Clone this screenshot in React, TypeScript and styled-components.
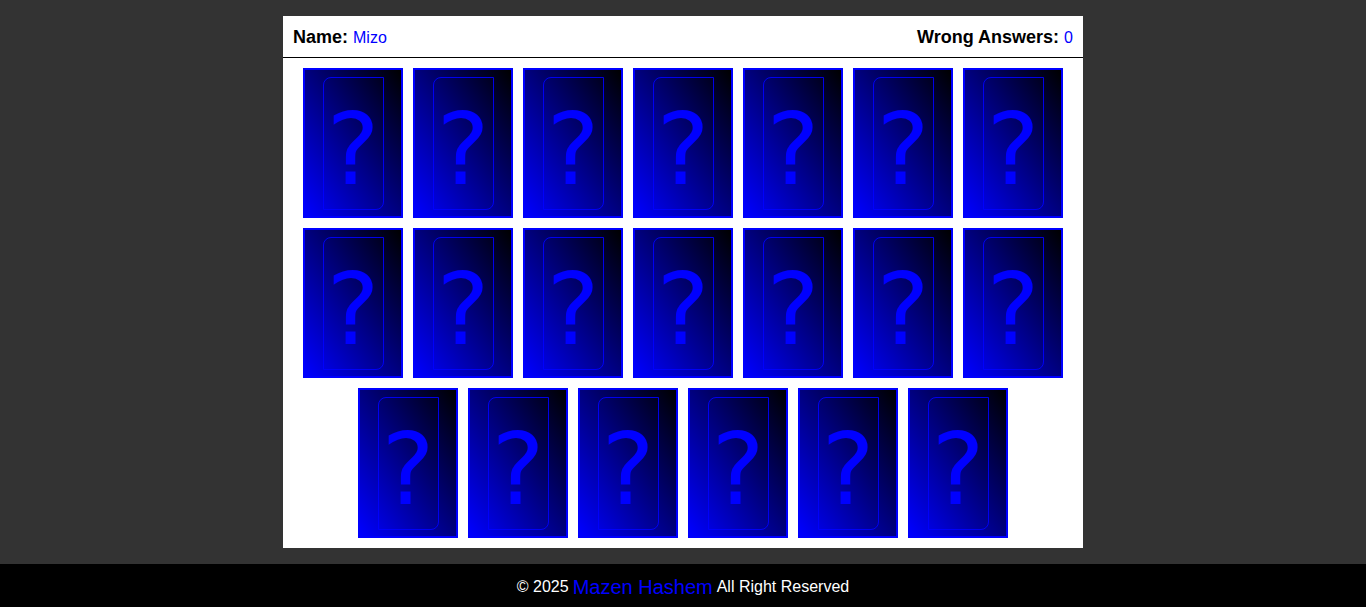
import React from "react"
import styled, { createGlobalStyle } from "styled-components"

const GlobalStyle = createGlobalStyle`
  * { box-sizing: border-box; }
  body {
    margin: 0;
    background-color: #333333;
    font-family: "Liberation Sans", Arial, sans-serif;
  }
`

const cards = Array.from({ length: 20 }, (_, i) => i)

export default function App() {
    return (
        <>
            <GlobalStyle />
            <Page>
                <Game>
                    <InfoBar>
                        <Info>Name: <Value>Mizo</Value></Info>
                        <Info>Wrong Answers: <Value>0</Value></Info>
                    </InfoBar>
                    <Cards>
                        {cards.map((c) => (
                            <Card key={c}>
                                <Face />
                                <Mark>?</Mark>
                            </Card>
                        ))}
                    </Cards>
                </Game>
                <Footer>
                    &copy; 2025 <Author>Mazen Hashem</Author> All Right Reserved
                </Footer>
            </Page>
        </>
    )
}

const Page = styled.div`
    display: flex;
    flex-direction: column;
    align-items: center;
    padding-top: 16px;
`
const Game = styled.div`
    width: 800px;
    background-color: white;
    padding-bottom: 10px;
`
const InfoBar = styled.div`
    display: flex;
    justify-content: space-between;
    align-items: center;
    height: 42px;
    padding: 2px 10px 0;
    border-bottom: 1px solid black;
`
const Info = styled.div`
    font-size: 18px;
    font-weight: bold;
    color: black;
`
const Value = styled.span`
    font-size: 16px;
    font-weight: normal;
    color: blue;
`
const Cards = styled.div`
    display: flex;
    flex-wrap: wrap;
    justify-content: center;
    gap: 10px;
    padding: 10px 20px 0;
`
const Card = styled.div`
    position: relative;
    width: 100px;
    height: 150px;
    border: 2px solid blue;
    background: linear-gradient(to top right, blue, black);
    display: flex;
    align-items: center;
    justify-content: center;
    overflow: hidden;
`
const Face = styled.div`
    position: absolute;
    left: 18px;
    top: 7px;
    width: 61px;
    height: 133px;
    border: 1px solid rgba(0, 0, 255, 0.9);
    border-radius: 8px 0 8px 0;
`
const Mark = styled.span`
    font-family: "DejaVu Sans", sans-serif;
    font-size: 100px;
    line-height: 1;
    color: blue;
    margin-top: 14px;
`
const Footer = styled.footer`
    align-self: stretch;
    margin-top: 16px;
    height: 43px;
    padding-top: 3px;
    background-color: black;
    color: white;
    font-size: 16px;
    display: flex;
    align-items: center;
    justify-content: center;
    gap: 4px;
`
const Author = styled.span`
    color: blue;
    font-size: 20px;
`
